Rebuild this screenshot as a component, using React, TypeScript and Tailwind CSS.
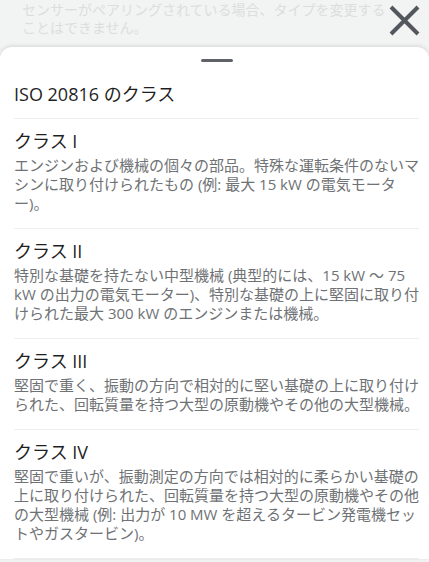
const classes = [
  {
    title: "クラス I",
    lines: [
      "エンジンおよび機械の個々の部品。特殊な運転条件のないマ",
      "シンに取り付けられたもの (例: 最大 15 kW の電気モータ",
      "ー)。",
    ],
  },
  {
    title: "クラス II",
    lines: [
      "特別な基礎を持たない中型機械 (典型的には、15 kW ～ 75",
      "kW の出力の電気モーター)、特別な基礎の上に堅固に取り付",
      "けられた最大 300 kW のエンジンまたは機械。",
    ],
  },
  {
    title: "クラス III",
    lines: [
      "堅固で重く、振動の方向で相対的に堅い基礎の上に取り付け",
      "られた、回転質量を持つ大型の原動機やその他の大型機械。",
    ],
  },
  {
    title: "クラス IV",
    lines: [
      "堅固で重いが、振動測定の方向では相対的に柔らかい基礎の",
      "上に取り付けられた、回転質量を持つ大型の原動機やその他",
      "の大型機械 (例: 出力が 10 MW を超えるタービン発電機セッ",
      "トやガスタービン)。",
    ],
  },
];

export default function App() {
  return (
    <div
      className="relative h-[562px] w-[429px] overflow-hidden bg-[#f2f3f3]"
      style={{ fontFamily: '"Open Sans", "Noto Sans CJK JP", sans-serif' }}
    >
      {/* dimmed page behind the sheet */}
      <div className="h-[47px] pl-[22px] pt-[1px] text-[14px] leading-[18px] text-[#dcdede]">
        <p className="whitespace-nowrap">センサーがペアリングされている場合、タイプを変更する</p>
        <p className="whitespace-nowrap">ことはできません。</p>
      </div>

      <button className="absolute right-[9px] top-[5px] h-[31px] w-[31px]">
        <svg viewBox="0 0 31 31" className="h-full w-full">
          <path d="M2 2 L29 29 M29 2 L2 29" stroke="#52585d" strokeWidth="4" />
        </svg>
      </button>

      <div className="rounded-t-xl bg-white pl-[14px] pr-[10px] shadow-[0_-1px_4px_rgba(0,0,0,0.12)]">
        <div className="flex justify-center pt-[12px]">
          <div className="h-[3px] w-8 rounded-full bg-[#5f6368]" />
        </div>

        <div className="border-b border-[#eeeeee] pb-[12px] pt-[20px] text-[18px] leading-6 text-[#1f1f1f]">
          ISO 20816 のクラス
        </div>

        {classes.map((c) => (
          <div key={c.title} className="border-b border-[#eeeeee] pb-[15px] pt-[10px]">
            <p className="text-[18px] leading-6 text-[#1f1f1f]">{c.title}</p>
            <div className="mt-[3px] text-[15px] leading-[19px] text-[#6f7275]">
              {c.lines.map((line) => (
                <p key={line} className="whitespace-nowrap">
                  {line}
                </p>
              ))}
            </div>
          </div>
        ))}
      </div>
    </div>
  );
}
